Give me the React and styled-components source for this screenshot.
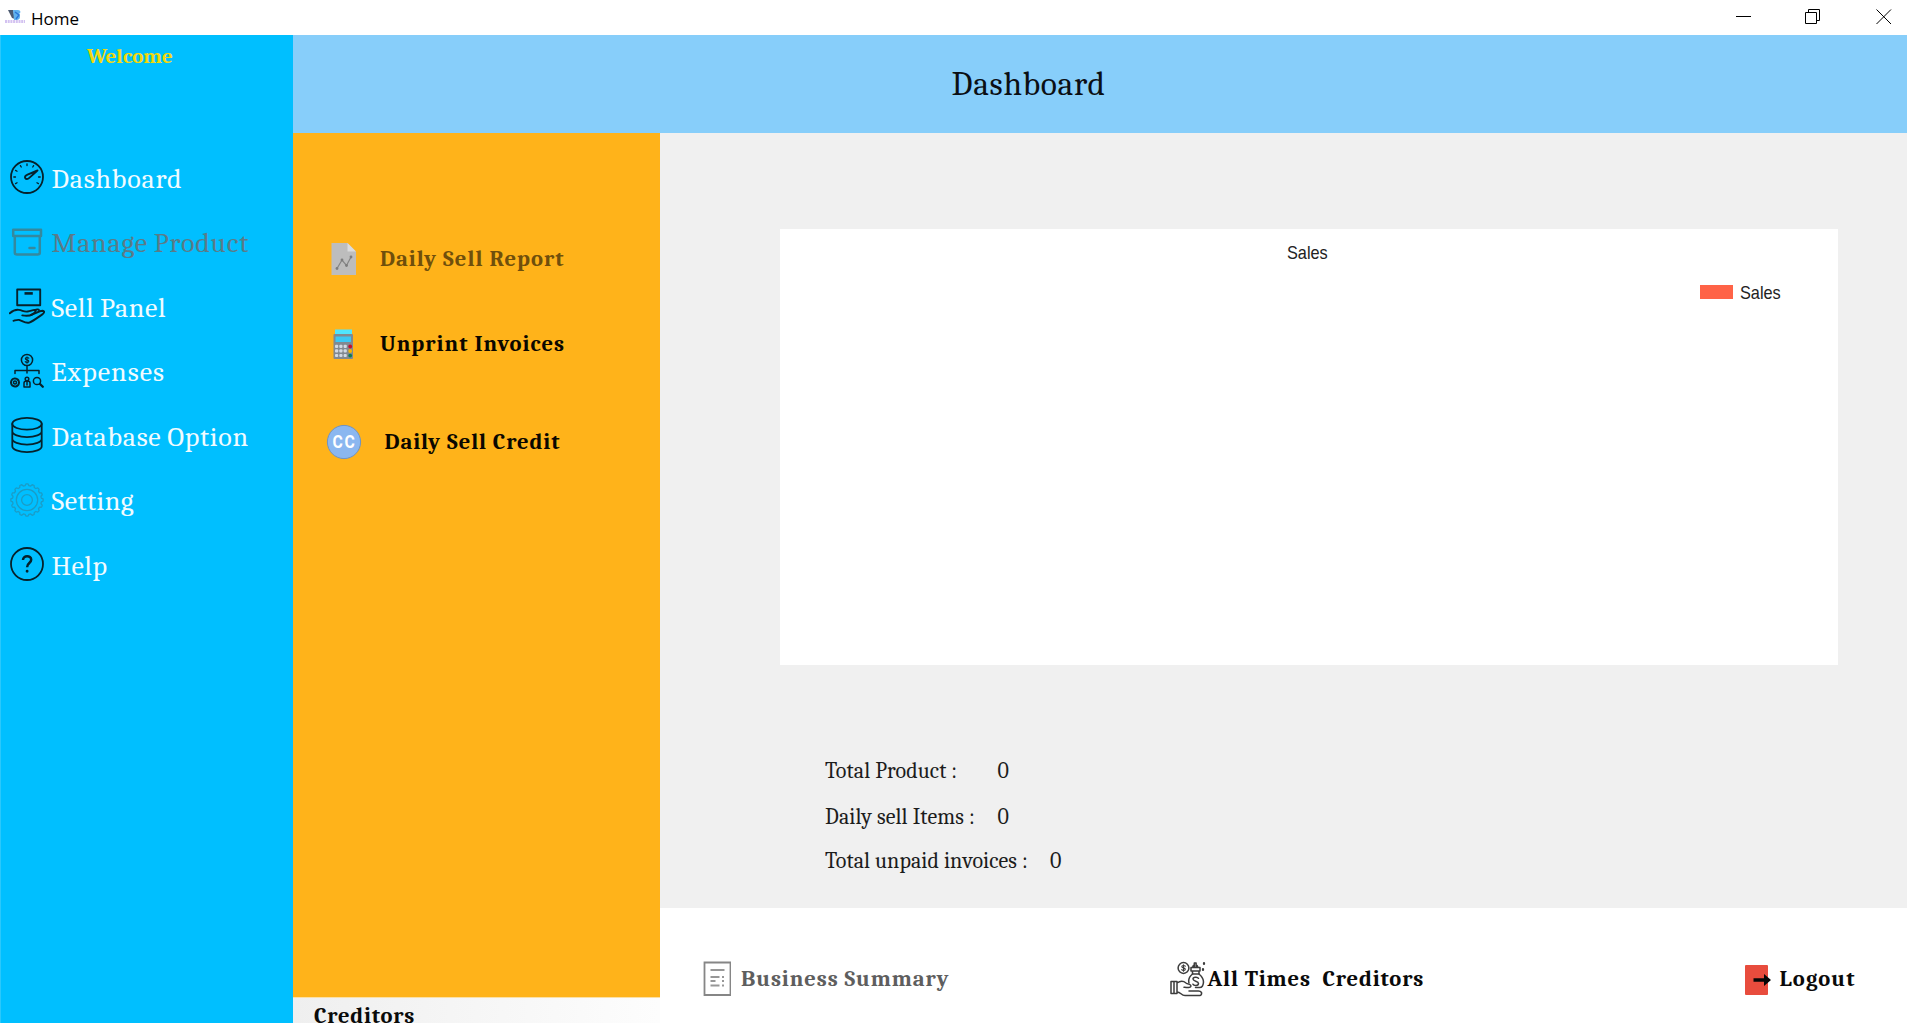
import React from "react";
import styled, { createGlobalStyle } from "styled-components";

const GlobalStyle = createGlobalStyle`
  * { box-sizing: border-box; }
  body { margin: 0; overflow: hidden; }
`;

const serif = `Cambria, Caladea, "Liberation Serif", serif`;

const Window = styled.div`
  display: flex;
  flex-direction: column;
  width: 1907px;
  height: 1023px;
  overflow: hidden;
  background: #fff;
  font-family: ${serif};
  color: #0a0a0a;
`;

const TitleBar = styled.header`
  display: flex;
  align-items: center;
  flex: 0 0 35px;
  padding: 0 15px 0 5px;
  background: #fff;
`;

const WindowTitle = styled.span`
  flex: 1;
  margin: 3px 0 0 6px;
  font: 17px/32px "Open Sans", "Noto Sans", sans-serif;
  color: #000;
`;

const WindowControls = styled.div`
  display: flex;
  align-items: flex-start;
  gap: 54px;
  height: 17px;

  svg:last-child { margin-left: 2px; }
`;

const Body = styled.div`
  display: flex;
  flex: 1;
  min-height: 0;
`;

const Sidebar = styled.nav`
  flex: 0 0 293px;
  background: #00bfff;
  border-left: 1px solid #2bc8fb;
`;

const Welcome = styled.div`
  height: 110px;
  padding: 7px 0 0 86px;
  font-size: 21px;
  font-weight: 700;
  line-height: 28px;
  color: #f2d80c;
`;

const MenuItem = styled.a`
  display: flex;
  align-items: center;
  gap: 6.5px;
  height: 64.5px;
  padding-left: 8px;
  font-size: 28px;
  letter-spacing: ${(p) => p.$track || 0.8}px;
  word-spacing: -1.2px;
  color: ${(p) => (p.$disabled ? "#5b7b88" : "#f1fbff")};

  svg { flex: none; }
  span { padding-top: 3px; }
`;

const Content = styled.div`
  display: flex;
  flex: 1;
  flex-direction: column;
  min-width: 0;
`;

const PageHeader = styled.div`
  display: flex;
  align-items: center;
  flex: 0 0 97.5px;
  padding-left: 658.5px;
  background: #87cefa;
  font-size: 33.5px;
  letter-spacing: 0.7px;
  color: #0b0f14;
`;

const Columns = styled.div`
  display: flex;
  flex: 1;
  min-height: 0;
`;

const ActionColumn = styled.div`
  display: flex;
  flex: 0 0 367px;
  flex-direction: column;
  min-height: 0;
  background: #ffb31a;
`;

const ActionList = styled.div`
  flex: 1;
  min-height: 0;
  padding-top: 99px;
`;

const Action = styled.a`
  display: flex;
  align-items: center;
  gap: ${(p) => p.$gap || 18}px;
  height: 54px;
  margin-bottom: ${(p) => p.$after || 0}px;
  padding-left: 33px;
  font-size: 22.6px;
  font-weight: 700;
  letter-spacing: ${(p) => p.$track || 1}px;
  color: ${(p) => (p.$disabled ? "#6f4f0c" : "#0a0700")};
`;

const CreditorsBar = styled.div`
  flex: none;
  height: 26.5px;
  padding-left: 21px;
  border-top: 1px solid #fbe0a6;
  background: linear-gradient(90deg, #efefef, #fdfdfd);
  font-size: 22.6px;
  font-weight: 700;
  line-height: 36px;
  letter-spacing: 0.8px;
`;

const Main = styled.main`
  display: flex;
  flex: 1;
  flex-direction: column;
  min-width: 0;
`;

const Overview = styled.section`
  flex: 0 0 775px;
  padding: 96px 69.5px 0 119.5px;
  background: #f0f0f0;
`;

const Chart = styled.div`
  display: flex;
  flex-direction: column;
  height: 436.5px;
  background: #fff;
  font: 18.5px/22px "Liberation Sans", Arial, sans-serif;
  color: #222;
`;

const ChartLabel = styled.span`
  display: inline-block;
  transform: scaleX(0.88);
  transform-origin: left center;
`;

const ChartTitle = styled.div`
  padding: 13px 0 0 507.5px;
`;

const Legend = styled.div`
  display: flex;
  align-items: center;
  gap: 7px;
  margin-top: 18px;
  padding-left: 920px;
`;

const Swatch = styled.i`
  width: 33px;
  height: 14px;
  margin-bottom: 1px;
  background: #ff6347;
`;

const Stats = styled.dl`
  display: flex;
  flex-direction: column;
  margin: 83.5px 0 0 45.5px;
  font-size: 22px;
  line-height: 45px;
  color: #1c1c1c;
`;

const Stat = styled.div`
  display: flex;
  height: ${(p) => p.$height}px;

  dt {
    width: ${(p) => p.$label}px;
    letter-spacing: ${(p) => p.$track || 0}px;
    white-space: nowrap;
  }
  dd { margin: 0; }
`;

const Footer = styled.footer`
  display: grid;
  grid-template-columns: 467.5px 574px auto;
  align-items: center;
  flex: 1;
  padding: 27.5px 0 0 42.5px;
`;

const FooterAction = styled.a`
  display: flex;
  align-items: center;
  gap: ${(p) => p.$gap}px;
  font-size: 22.6px;
  font-weight: 700;
  letter-spacing: ${(p) => p.$track || 0.9}px;
  white-space: pre;
  color: ${(p) => (p.$disabled ? "#5e5e5e" : "#0a0a0a")};
`;

const DoorSvg = styled.svg`
  margin-top: 2px;
`;

const AppMark = () => (
  <svg width="20" height="17" viewBox="0 0 20 17">
    <path d="M3 1h5l2 9-3-1z" fill="#4c5a70" />
    <path d="M8 1h5c3 0 3 3 1 4 2 2 1 6-2 6H9z" fill="#5fb2ee" />
    <path d="M10 3l4 3-3 4" stroke="#2a76d8" strokeWidth="1.4" fill="none" />
    <path d="M0 12.5h20" stroke="#c9b3ee" strokeWidth="3" strokeDasharray="2 .7" opacity=".8" />
  </svg>
);

const Line = ({ size = 36, color = "#06222c", width = 1.6, children }) => (
  <svg width={size} height={size} viewBox="0 0 36 36" fill="none" stroke={color}
    strokeWidth={width} strokeLinecap="round" strokeLinejoin="round">
    {children}
  </svg>
);

const ticks = [150, 180, 210, 240, 270, 300, 0, 30].map((deg) => {
  const a = (deg * Math.PI) / 180;
  return `M${18 + 11.5 * Math.cos(a)} ${18 + 11.5 * Math.sin(a)}L${18 + 13.2 * Math.cos(a)} ${18 + 13.2 * Math.sin(a)}`;
}).join("");

const GaugeIcon = () => (
  <Line width={1.8}>
    <circle cx="18" cy="18" r="16" />
    <path d={ticks} strokeWidth="1.3" />
    <path d="M28.5 11.5 18.5 15.6c-2.4 1-3 2.4-2.2 3.6s2.4 1.1 4-.3z" strokeWidth="1.9" />
  </Line>
);

const BoxIcon = () => (
  <Line color="#34899f" width={2.5}>
    <path d="M4.2 5.8h27.8v6.2H4.2zM5.8 12v16.5q0 2 2 2h21q2 0 2-2V12M20.5 24h5" />
  </Line>
);

const HandBoxIcon = () => (
  <Line width={1.9}>
    <path d="M8.2 1.5h23v15.7h-23z" />
    <path d="M15.5 5.4h8.3" strokeWidth="2.6" strokeLinecap="butt" />
    <path d="M.8 25.3c3-2.6 6-3.8 9-3.4 4 .6 5 2.200 9 1.6 3-.4 6-2.2 7.5-1.4 1.2 1-.6 2.7-3 4.3-2.5 1.6-6 1.6-10 1" />
    <path d="M22 27c4-1 8-4.2 11.5-4.2 2.4.2 2 2-.2 3.6-5 3.4-9 6.5-13 8.2-4 1-7-1.8-10.3-2.7-2-.3-3.5.4-5.5.9" />
    <path d="M25.5 22.3c2-1 4-1.4 4.5-.2" />
  </Line>
);

const ExpensesIcon = () => (
  <Line width={1.5}>
    <circle cx="18" cy="7" r="5.600" />
    <path d="M19.8 5.2c-.8-1-3.5-.9-3.5.5s3.5 1 3.5 2.5-2.800 1.5-3.6.4M18 3.7v6.6" strokeWidth="1.100" />
    <path d="M18 13v7M6 20.5v-3h24v3" />
    <circle cx="6" cy="29.5" r="4" strokeWidth="2" strokeDasharray="2.2 .8" />
    <circle cx="6" cy="29.5" r="1.5" />
    <circle cx="18" cy="26" r="1.8" />
    <path d="M15 34v-4q0-2 3-2t3 2v4zM18 29v3" />
    <circle cx="28" cy="28" r="3.6" />
    <path d="m31 31 2.8 2.8" strokeWidth="2.3" />
  </Line>
);

const DatabaseIcon = () => (
  <Line width={1.8}>
    <ellipse cx="18" cy="6.8" rx="14.7" ry="5.9" />
    <path d="M3.3 6.8v22.5c0 3.2 6.6 5.8 14.7 5.8s14.7-2.6 14.7-5.8V6.8M3.3 14.3c0 3.2 6.6 5.8 14.7 5.8s14.7-2.6 14.7-5.8M3.3 21.8c0 3.2 6.6 5.8 14.7 5.8s14.7-2.6 14.7-5.8" />
  </Line>
);

const gearOutline = Array.from({ length: 97 }, (_, i) => {
  const a = (i / 96) * Math.PI * 2;
  const r = 15.3 + Math.max(-0.9, Math.min(0.9, 1.6 * Math.cos(a * 16)));
  return `${i ? "L" : "M"}${(18 + r * Math.sin(a)).toFixed(2)} ${(18 - r * Math.cos(a)).toFixed(2)}`;
}).join("");

const GearIcon = () => (
  <Line color="#1b9cc6" width={1.3}>
    <path d={gearOutline} />
    <circle cx="18" cy="18" r="10.7" />
    <circle cx="18" cy="18" r="5.4" />
  </Line>
);

const HelpIcon = () => (
  <Line width={1.8}>
    <circle cx="18" cy="18" r="16" />
    <path d="M14 14c0-5 8.2-5 8.2-.2 0 3.4-4.100 3.2-4.100 7.4" strokeWidth="2.5" strokeLinecap="butt" />
    <circle cx="18.1" cy="25.3" r=".8" strokeWidth="1.3" fill="#06222c" />
  </Line>
);

const ReportIcon = () => (
  <svg width="36" height="36" viewBox="0 0 36 36">
    <path d="M5.500 2h16l8.5 8.5V34H5.500z" fill="#bdbdbd" />
    <path d="M21.5 2v8.5H30z" fill="#dcdcdc" />
    <path d="m11 27.5 5-8.5 4.5 5.5 4.5-8.5" fill="none" stroke="#858585" strokeWidth="1.2" />
    <g fill="#7d7d7d">
      <circle cx="11" cy="27.5" r="1.4" />
      <circle cx="16" cy="19" r="1.4" />
      <circle cx="20.5" cy="24.5" r="1.4" />
      <circle cx="25" cy="16" r="1.4" />
    </g>
  </svg>
);

const CalculatorIcon = () => (
  <svg width="36" height="36" viewBox="0 0 36 36">
    <path d="M9 3.500h17v5H9z" fill="#50e6ff" />
    <rect x="7.5" y="8" width="19.5" height="25" rx="1" fill="#828990" />
    <rect x="9.500" y="10.500" width="15.5" height="5.5" fill="#3cc8f4" />
    <g fill="#d3dae3">
      {[18.8, 23.3, 27.9].map((y) => [9, 13.3, 17.6].map((x) => (
        <rect key={`${x}-${y}`} x={x} y={y} width="3.200" height="3.200" rx="1" />
      )))}
    </g>
    <circle cx="24.200" cy="20.5" r="1.9" fill="#c50f2f" />
    <circle cx="24.200" cy="25" r="1.9" fill="#f5b800" />
    <circle cx="24.200" cy="29.6" r="1.9" fill="#107c55" />
  </svg>
);

const CreditIcon = () => (
  <svg width="36" height="36" viewBox="0 0 36 36">
    <circle cx="18" cy="18" r="16.6" fill="#8bb7f0" stroke="#6f93c4" strokeWidth="1" />
    <text x="6.600" y="24.300" fill="#fff" fontFamily="Roboto, sans-serif" letterSpacing="2"
      fontWeight="700" fontSize="18" textLength="24" lengthAdjust="spacingAndGlyphs">CC</text>
  </svg>
);

const SummaryIcon = () => (
  <svg width="28" height="36" viewBox="0 0 28 36" fill="none" stroke="#868686" strokeWidth="1.8">
    <path d="M1.500 1.500h26v32.500h-26z" />
    <path d="M7.500 9h14M7.500 16h9M7.500 20h5M7.500 24.500h9M19 16h2M19 20h2M19 24.500h2" strokeWidth="2" stroke="#979797" />
  </svg>
);

const MoneyHandIcon = () => (
  <Line color="#3d3d3d" width={1.5}>
    <circle cx="13.5" cy="7" r="5.4" />
    <path d="M15.3 5.2c-.8-1-3.5-.9-3.5.5s3.5 1 3.5 2.5-2.800 1.5-3.6.4M13.5 3.7v6.6" strokeWidth="1.100" />
    <path d="M21 6.5h9v3.500h-9zM22.500 6.500l.8-2 1 .8V2h1.800v3.300l1-.8 1 2M22.500 10v3h6.500v-3" />
    <path d="M22.5 13c-3 2.5-4.5 5.500-3.5 9M29 13c4 3.5 5.500 8 3.5 12q-1 1.500-3 1.500h-4" />
    <path d="M28.5 17.3c-1-1.700-5.500-1.500-5.500.8s5.500 2 5.500 4.400-4.600 2.500-5.600.7" />
    <path d="M1 20.500h6v12H1zM4 20.500v12M7 22c3-2 6-2.500 9 0 2 1.500 5 1 5 3s-4 1.500-7 1.200M7 31c4 0 4 3.500 8 3.500h15q2-.5 1.500-3-1-1.500-3-1.500H19" />
    <path d="M34 2v1M33 8v1" strokeWidth="2.200" />
  </Line>
);

const LogoutIcon = () => (
  <DoorSvg width="28" height="32" viewBox="0 0 28 32">
    <rect x="1" y="1" width="23" height="30" rx="1" fill="#e84c3d" />
    <path d="M9.5 14.2H20V10L27 16l-7 6v-4.200H9.500z" fill="#060606" />
  </DoorSvg>
);

const MinimizeIcon = () => (
  <svg width="15" height="15"><path d="M0 7.500h15" stroke="#000" /></svg>
);
const RestoreIcon = () => (
  <svg width="15" height="15" fill="none" stroke="#000">
    <path d="M.5 3.500h11v11H.5zM3.500 3.500v-3h11v11h-3" />
  </svg>
);
const CloseIcon = () => (
  <svg width="16" height="16"><path d="m.5.5 14.500 14.500m0-14.500L.5 15" stroke="#000" /></svg>
);

const menu = [
  { label: "Dashboard", Icon: GaugeIcon },
  { label: "Manage Product", Icon: BoxIcon, disabled: true },
  { label: "Sell Panel", Icon: HandBoxIcon, track: 0.65 },
  { label: "Expenses", Icon: ExpensesIcon, track: 1 },
  { label: "Database Option", Icon: DatabaseIcon, track: 0.75 },
  { label: "Setting", Icon: GearIcon, track: 0.45 },
  { label: "Help", Icon: HelpIcon, track: 0.5 },
];

export default function App() {
  return (
    <Window>
      <GlobalStyle />
      <TitleBar>
        <AppMark />
        <WindowTitle>Home</WindowTitle>
        <WindowControls>
          <MinimizeIcon />
          <RestoreIcon />
          <CloseIcon />
        </WindowControls>
      </TitleBar>
      <Body>
        <Sidebar>
          <Welcome>Welcome</Welcome>
          {menu.map(({ label, Icon, disabled, track }) => (
            <MenuItem key={label} $disabled={disabled} $track={track}>
              <Icon />
              <span>{label}</span>
            </MenuItem>
          ))}
        </Sidebar>
        <Content>
          <PageHeader>Dashboard</PageHeader>
          <Columns>
            <ActionColumn>
              <ActionList>
                <Action $disabled $after={31.5}><ReportIcon />Daily Sell Report</Action>
                <Action $after={43.5}><CalculatorIcon />Unprint Invoices</Action>
                <Action $gap={22.5} $track={0.9}><CreditIcon />Daily Sell Credit</Action>
              </ActionList>
              <CreditorsBar>Creditors</CreditorsBar>
            </ActionColumn>
            <Main>
              <Overview>
                <Chart>
                  <ChartTitle><ChartLabel>Sales</ChartLabel></ChartTitle>
                  <Legend><Swatch /><ChartLabel>Sales</ChartLabel></Legend>
                </Chart>
                <Stats>
                  <Stat $height={46.5} $label={172.5} $track={0.1}><dt>Total Product :</dt><dd>0</dd></Stat>
                  <Stat $height={43.5} $label={172.5} $track={0.13}><dt>Daily sell Items :</dt><dd>0</dd></Stat>
                  <Stat $height={45} $label={225} $track={0.07}><dt>Total unpaid invoices :</dt><dd>0</dd></Stat>
                </Stats>
              </Overview>
              <Footer>
                <FooterAction $disabled $gap={10.5}><SummaryIcon />Business Summary</FooterAction>
                <FooterAction $gap={1.5} $track={0.85}><MoneyHandIcon />{"All Times  Creditors"}</FooterAction>
                <FooterAction $gap={7.5} $track={1.1}><LogoutIcon />Logout</FooterAction>
              </Footer>
            </Main>
          </Columns>
        </Content>
      </Body>
    </Window>
  );
}
